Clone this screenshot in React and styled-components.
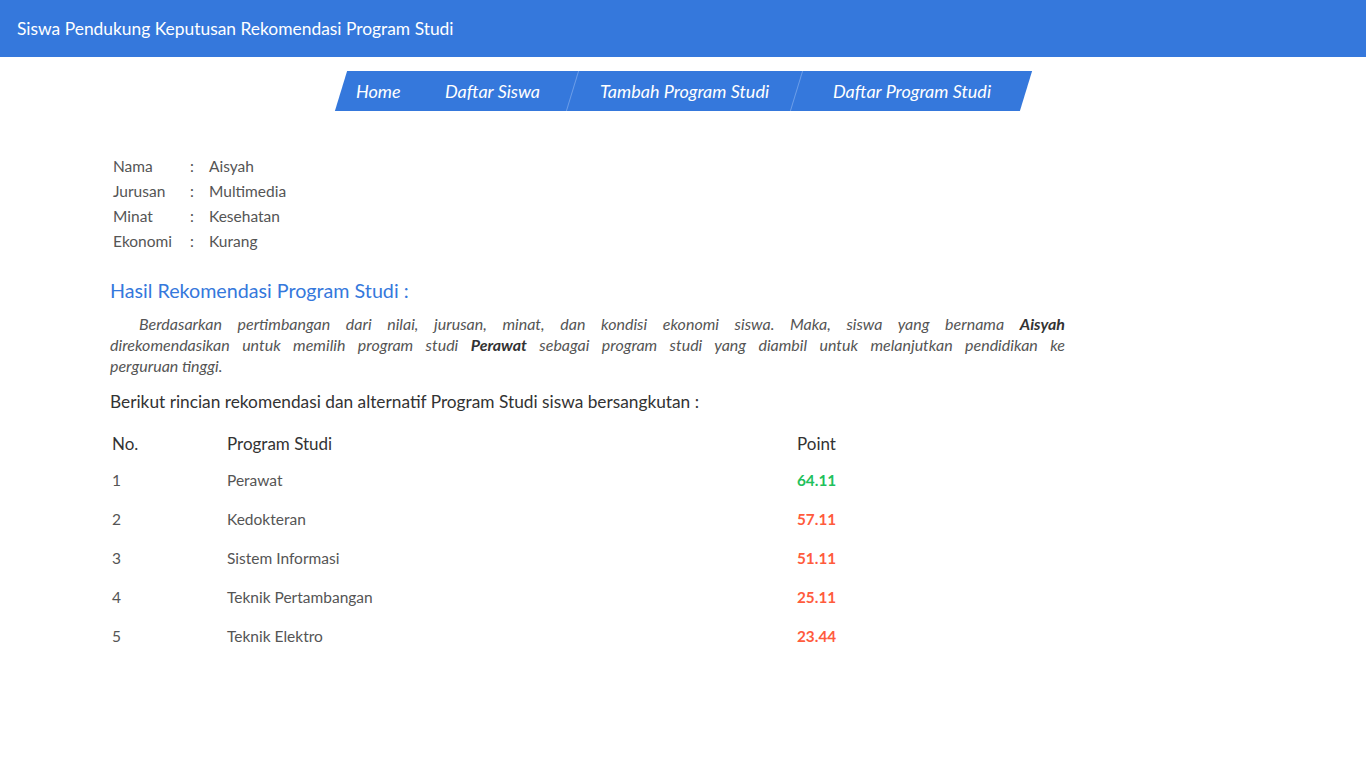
import * as React from 'react';
import styled, { createGlobalStyle } from 'styled-components';

const GlobalStyle = createGlobalStyle`
  body {
    margin: 0;
    background: #fff;
    font-family: Lato, "Open Sans", sans-serif;
    color: #555;
  }
`;

const Header = styled.header`
  height: 57px;
  background: #3578dc;
  display: flex;
  align-items: center;
  padding-left: 17px;
  color: #fff;
  font-size: 17.4px;
`;

const NavWrap = styled.div`
  display: flex;
  justify-content: center;
  margin-top: 14px;
`;

const Nav = styled.nav`
  display: flex;
  height: 40px;
  background: #3578dc;
  transform: skewX(-17deg);
`;

const NavItem = styled.a`
  display: flex;
  align-items: center;
  padding: 0 ${(p) => p.$r}px 0 ${(p) => p.$l}px;
  color: #fff;
  font-size: 18px;
  font-style: italic;
  text-decoration: none;
  border-left: ${(p) => (p.$sep ? '1px solid #6d9ee8' : 'none')};
  span {
    display: inline-block;
    transform: skewX(17deg);
  }
`;

const Content = styled.main`
  width: 955px;
  margin: 42px 0 0 110px;
`;

const InfoTable = styled.div`
  display: grid;
  grid-template-columns: 77px 19px auto;
  grid-auto-rows: 25px;
  align-items: center;
  padding-left: 3px;
  font-size: 15.5px;
  color: #555;
`;

const Title = styled.h2`
  margin: 26px 0 0;
  font-weight: normal;
  font-size: 19.7px;
  line-height: 24px;
  color: #3578dc;
`;

const Paragraph = styled.div`
  margin-top: 10px;
  font-style: italic;
  font-size: 16px;
  line-height: 21px;
  color: #555;
  b {
    color: #333;
  }
`;

const Line = styled.span`
  display: block;
  text-align: justify;
  text-align-last: ${(p) => (p.$last ? 'left' : 'justify')};
  text-indent: ${(p) => (p.$first ? '29px' : '0')};
`;

const Lead = styled.p`
  margin: 15px 0 0;
  font-size: 17.3px;
  line-height: 22px;
  color: #333;
`;

const Table = styled.div`
  margin-top: 13px;
  display: grid;
  grid-template-columns: 115px 570px auto;
  width: 730px;
  padding-left: 2px;
`;

const HeadCell = styled.div`
  height: 34px;
  display: flex;
  align-items: center;
  font-size: 17px;
  color: #333;
`;

const Cell = styled.div`
  height: 39px;
  display: flex;
  align-items: center;
  font-size: 15.5px;
  color: #555;
`;

const PointCell = styled(Cell)`
  font-weight: bold;
  font-size: 15.3px;
  color: ${(p) => (p.$best ? '#1fc15c' : '#ff5b3d')};
`;

const info = [
  ['Nama', 'Aisyah'],
  ['Jurusan', 'Multimedia'],
  ['Minat', 'Kesehatan'],
  ['Ekonomi', 'Kurang'],
];

const results = [
  ['Perawat', '64.11'],
  ['Kedokteran', '57.11'],
  ['Sistem Informasi', '51.11'],
  ['Teknik Pertambangan', '25.11'],
  ['Teknik Elektro', '23.44'],
];

const App = () => {
  return (
    <>
      <GlobalStyle />
      <Header>Siswa Pendukung Keputusan Rekomendasi Program Studi</Header>
      <NavWrap>
        <Nav>
          <NavItem href="#" $l={15} $r={22}>
            <span>Home</span>
          </NavItem>
          <NavItem href="#" $l={22} $r={32}>
            <span>Daftar Siswa</span>
          </NavItem>
          <NavItem href="#" $sep $l={27} $r={27}>
            <span>Tambah Program Studi</span>
          </NavItem>
          <NavItem href="#" $sep $l={36} $r={35}>
            <span>Daftar Program Studi</span>
          </NavItem>
        </Nav>
      </NavWrap>
      <Content>
        <InfoTable>
          {info.map(([label, value]) => (
            <React.Fragment key={label}>
              <span>{label}</span>
              <span>:</span>
              <span>{value}</span>
            </React.Fragment>
          ))}
        </InfoTable>
        <Title>Hasil Rekomendasi Program Studi :</Title>
        <Paragraph>
          <Line $first>
            Berdasarkan pertimbangan dari nilai, jurusan, minat, dan kondisi ekonomi siswa. Maka,
            siswa yang bernama <b>Aisyah</b>
          </Line>
          <Line>
            direkomendasikan untuk memilih program studi <b>Perawat</b> sebagai program studi yang
            diambil untuk melanjutkan pendidikan ke
          </Line>
          <Line $last>perguruan tinggi.</Line>
        </Paragraph>
        <Lead>Berikut rincian rekomendasi dan alternatif Program Studi siswa bersangkutan :</Lead>
        <Table>
          <HeadCell>No.</HeadCell>
          <HeadCell>Program Studi</HeadCell>
          <HeadCell>Point</HeadCell>
          {results.map(([name, point], i) => (
            <React.Fragment key={name}>
              <Cell>{i + 1}</Cell>
              <Cell>{name}</Cell>
              <PointCell $best={i === 0}>{point}</PointCell>
            </React.Fragment>
          ))}
        </Table>
      </Content>
    </>
  );
};

export default App;
